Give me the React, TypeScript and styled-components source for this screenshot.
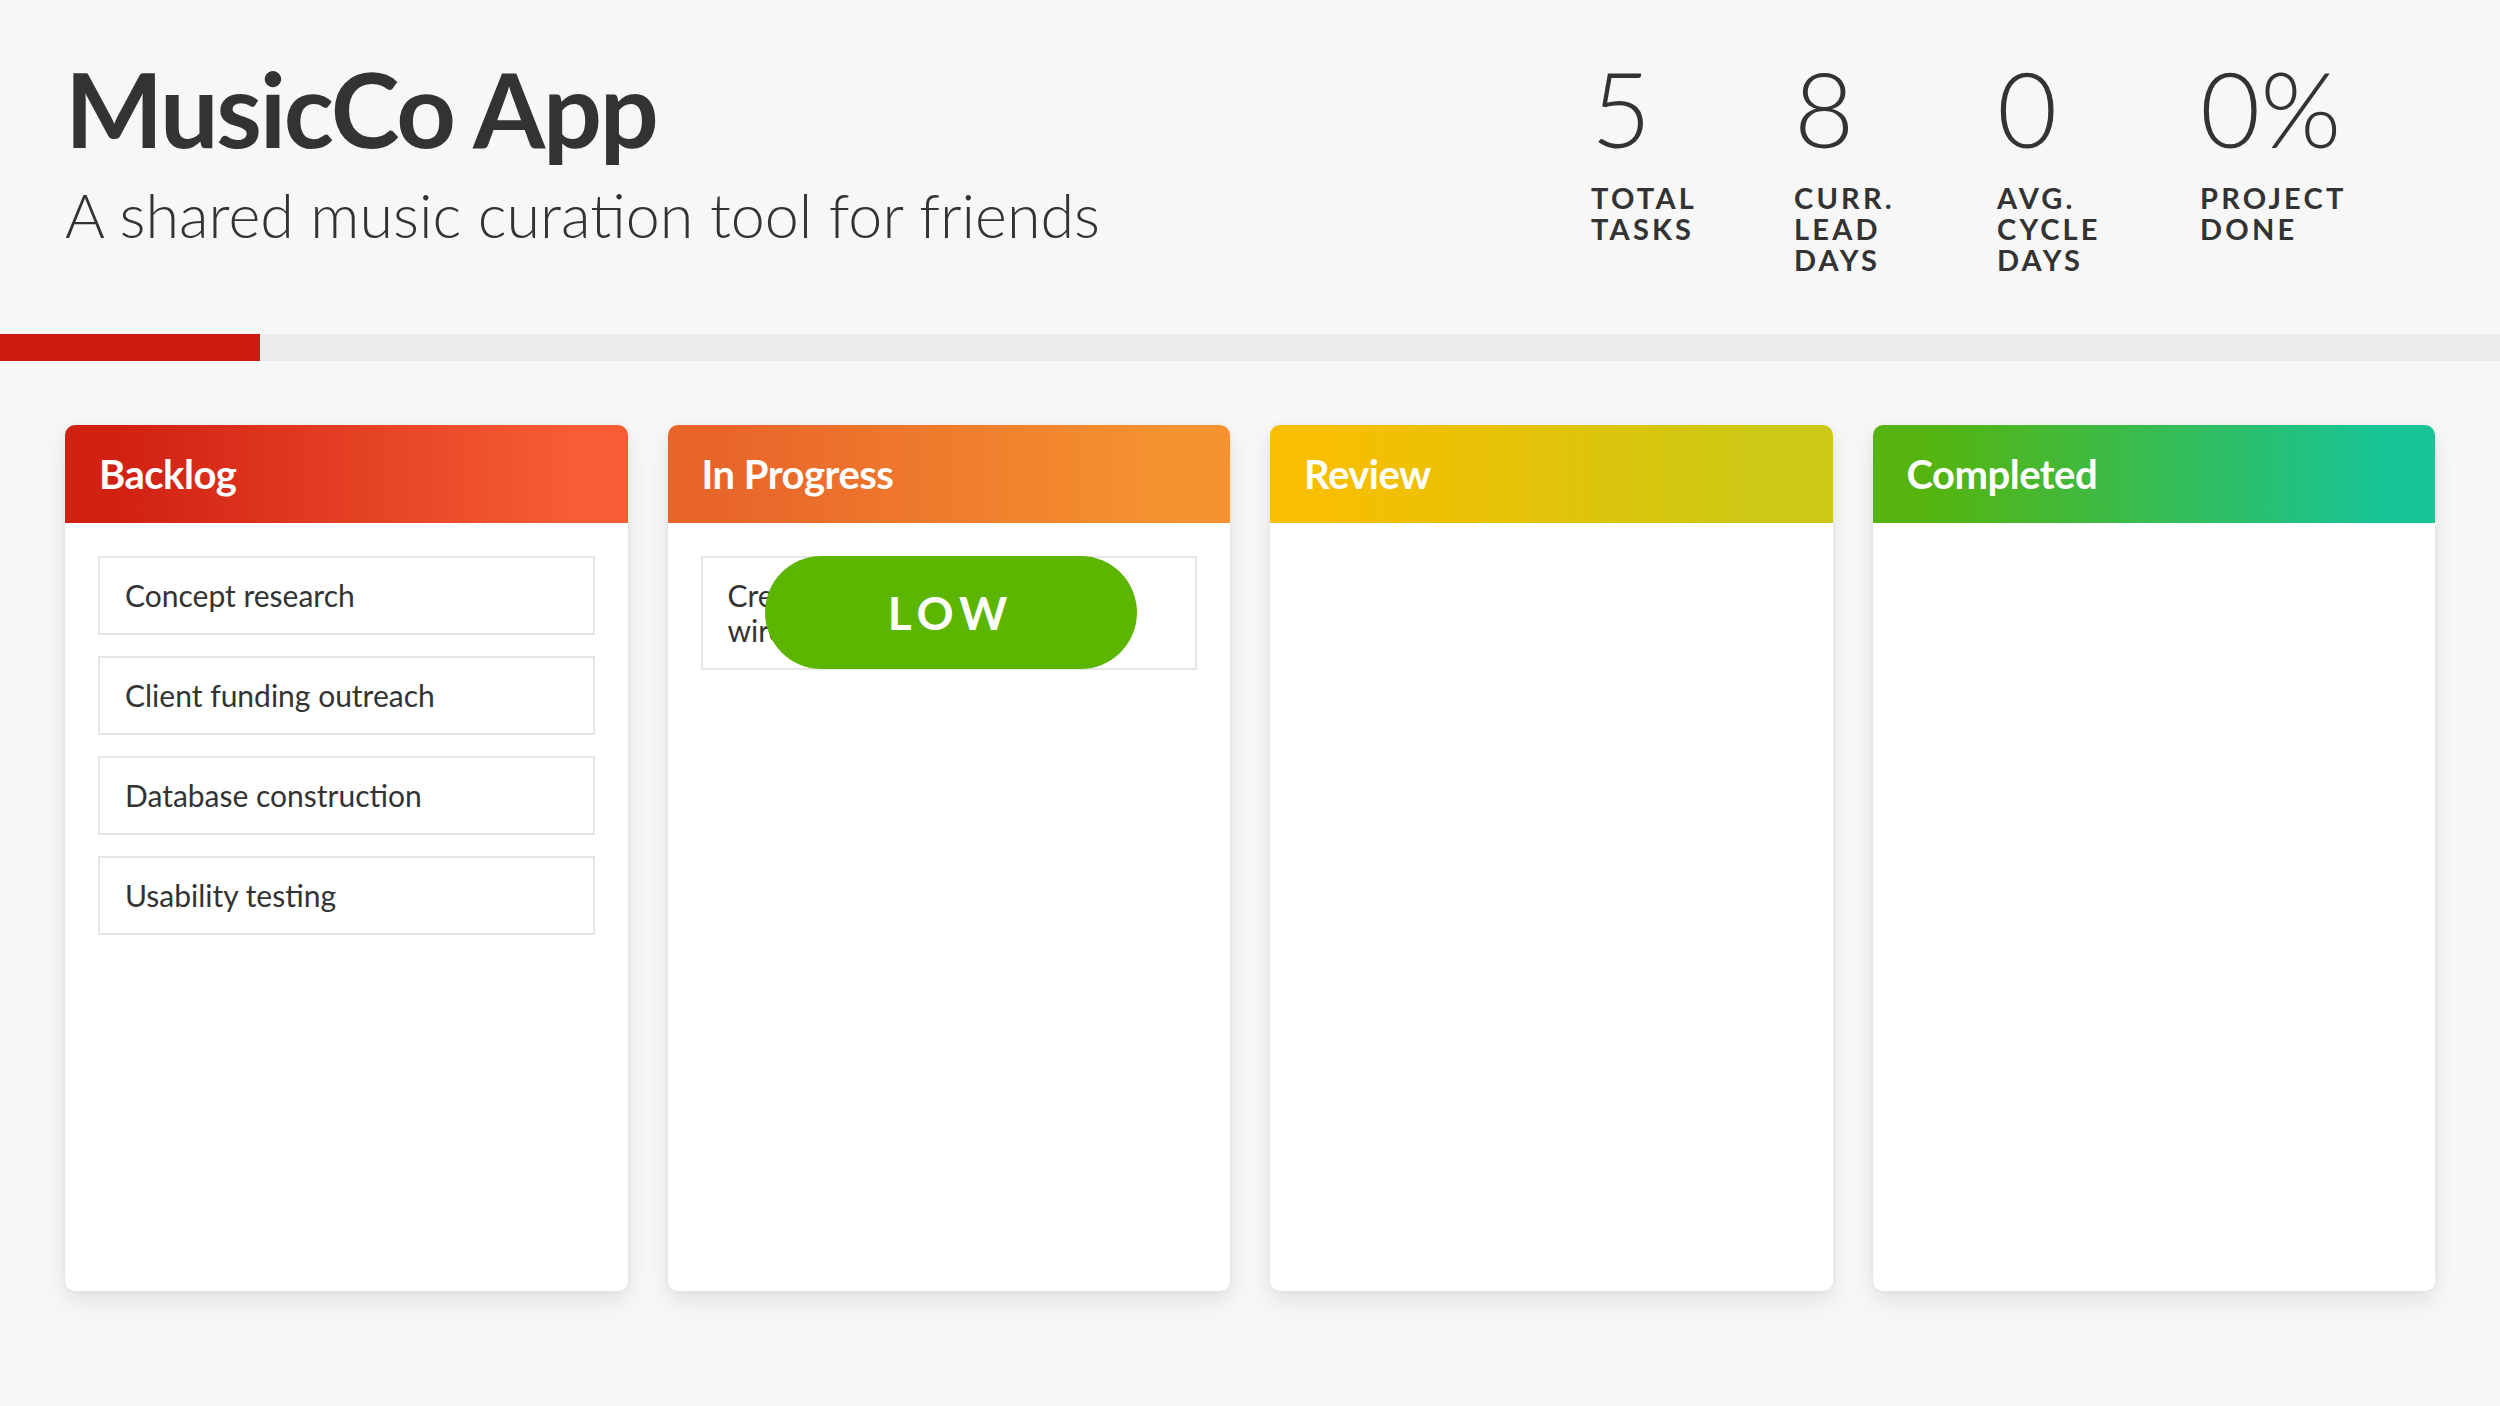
import React from 'react'
import styled, { createGlobalStyle } from 'styled-components'

interface Column {
  title: string
  from: string
  to: string
  tasks: string[]
}

const columns: Column[] = [
  {
    title: 'Backlog',
    from: '#d12113',
    to: '#f65d34',
    tasks: ['Concept research', 'Client funding outreach', 'Database construction', 'Usability testing'],
  },
  { title: 'In Progress', from: '#e8652a', to: '#f69330', tasks: ['Create low-fidelity prototype wireframes'] },
  { title: 'Review', from: '#f8be00', to: '#cbc916', tasks: [] },
  { title: 'Completed', from: '#55b40f', to: '#19c496', tasks: [] },
]

const stats = [
  { value: '5', label: 'Total Tasks' },
  { value: '8', label: 'Curr. Lead Days' },
  { value: '0', label: 'Avg. Cycle Days' },
  { value: '0%', label: 'Project Done' },
]

const App: React.FC = () => {
  const done = 0.104

  return (
    <Page>
      <GlobalStyle />
      <Header>
        <TitleBlock>
          <Title>MusicCo App</Title>
          <Subtitle>A shared music curation tool for friends</Subtitle>
        </TitleBlock>
        <Stats>
          {stats.map((s) => (
            <Stat key={s.label}>
              <StatValue>{s.value}</StatValue>
              <StatLabel>{s.label}</StatLabel>
            </Stat>
          ))}
        </Stats>
      </Header>
      <Progress>
        <ProgressFill style={{ width: `${done * 2500}px` }} />
      </Progress>
      <Board>
        {columns.map((col) => (
          <Lane key={col.title}>
            <LaneHeader from={col.from} to={col.to}>
              {col.title}
            </LaneHeader>
            <LaneBody>
              {col.tasks.map((task) => (
                <Card key={task}>
                  {task}
                  {col.title === 'In Progress' && <Priority>LOW</Priority>}
                </Card>
              ))}
            </LaneBody>
          </Lane>
        ))}
      </Board>
    </Page>
  )
}

const GlobalStyle = createGlobalStyle`
  html, body {
    margin: 0;
    padding: 0;
    background: #f7f7f7;
  }
  body {
    font-family: Lato, "Open Sans", sans-serif;
    color: #333333;
  }
`

const Page = styled.div`
  width: 2500px;
  min-height: 1406px;
  background: #f7f7f7;
`

const Header = styled.header`
  height: 334px;
  display: flex;
  justify-content: space-between;
  align-items: flex-start;
  padding: 0 145px 0 65px;
  box-sizing: border-box;
`

const TitleBlock = styled.div`
  padding-top: 56px;
`

const Title = styled.h1`
  margin: 0;
  font-size: 104px;
  line-height: 1;
  font-weight: 700;
  letter-spacing: -2.3px;
  color: #333333;
`

const Subtitle = styled.p`
  margin: 24px 0 0;
  font-size: 61px;
  line-height: 1;
  font-weight: 300;
  color: #333333;
`

const Stats = styled.div`
  display: flex;
  gap: 48px;
  padding-top: 56px;
`

const Stat = styled.div`
  width: 155px;
`

const StatValue = styled.div`
  font-size: 104px;
  line-height: 1;
  font-weight: 300;
  color: #333333;
`

const StatLabel = styled.div`
  margin-top: 22px;
  font-size: 29px;
  line-height: 31px;
  font-weight: 700;
  letter-spacing: 3.2px;
  text-transform: uppercase;
  color: #333333;
`

const Progress = styled.div`
  height: 27px;
  background: #ebebeb;
`

const ProgressFill = styled.div`
  height: 100%;
  background: #cd1b11;
`

const Board = styled.main`
  display: grid;
  grid-template-columns: repeat(4, 1fr);
  gap: 40px;
  padding: 64px 65px 0;
`

const Lane = styled.section`
  height: 866px;
  background: #ffffff;
  border-radius: 10px;
  box-shadow: 0 10px 22px rgba(0, 0, 0, 0.09), 0 0 6px rgba(0, 0, 0, 0.04);
  display: flex;
  flex-direction: column;
`

const LaneHeader = styled.h2<{ from: string; to: string }>`
  margin: 0;
  height: 98px;
  display: flex;
  align-items: center;
  padding: 0 34px;
  border-radius: 10px 10px 0 0;
  background: linear-gradient(90deg, ${(p) => p.from} 10%, ${(p) => p.to} 90%);
  color: #ffffff;
  font-size: 40px;
  font-weight: 700;
  letter-spacing: -0.5px;
`

const LaneBody = styled.div`
  padding: 33px;
  display: flex;
  flex-direction: column;
  gap: 21px;
`

const Card = styled.div`
  position: relative;
  border: 2px solid #e6e6e6;
  padding: 20px 25px;
  font-size: 30px;
  line-height: 35px;
  color: #333333;
  background: #ffffff;
`

const Priority = styled.span`
  position: absolute;
  top: -2px;
  left: 62px;
  width: 372px;
  height: 113px;
  border-radius: 57px;
  background: #5cb500;
  color: #ffffff;
  display: flex;
  align-items: center;
  justify-content: center;
  font-size: 46px;
  font-weight: 700;
  letter-spacing: 6px;
`

export default App
